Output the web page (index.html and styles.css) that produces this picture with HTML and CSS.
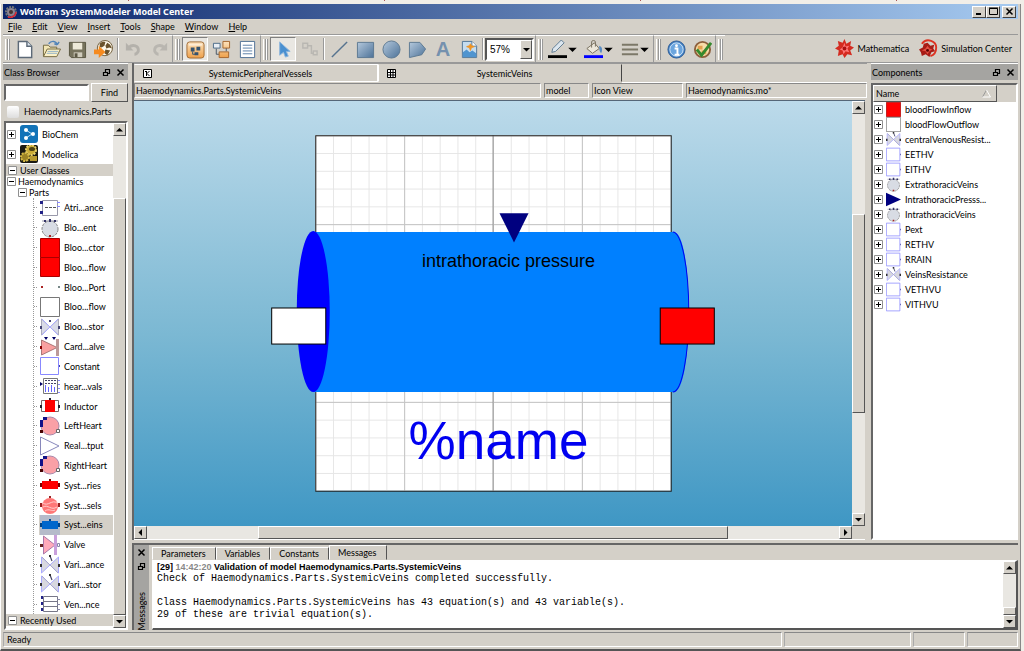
FILE: index.html
```html
<!DOCTYPE html>
<html lang="en">
<head>
  <meta charset="UTF-8">
  <meta name="viewport" content="width=device-width, initial-scale=1">
  <title>Wolfram SystemModeler Model Center</title>
  <link rel="stylesheet" href="styles.css">
</head>
<body>

<!-- shared icons -->
<svg class="sprite" aria-hidden="true">
  <linearGradient id="g-steel" x1="0" y1="0" x2="1" y2="1"><stop offset="0" stop-color="#b4c8dc"/><stop offset="1" stop-color="#4d7298"/></linearGradient>
  <linearGradient id="g-orange" x1="0" y1="0" x2="0" y2="1"><stop offset="0" stop-color="#fde3bd"/><stop offset="1" stop-color="#eea04a"/></linearGradient>
  <symbol id="plus" viewBox="0 0 9 9"><path d="M.5.5h8v8h-8z" fill="#fff" stroke="#909090"/><path d="M2 4.500h5M4.500 2v5" stroke="#000" fill="none"/></symbol>
  <symbol id="minus" viewBox="0 0 9 9"><path d="M.5.5h8v8h-8z" fill="#fff" stroke="#909090"/><path d="M2 4.500h5" stroke="#000"/></symbol>
  <symbol id="up" viewBox="0 0 9 9"><path d="M1 6.500h7L4.500 3z"/></symbol>
  <symbol id="down" viewBox="0 0 9 9"><path d="M1 3h7L4.500 6.500z"/></symbol>
  <symbol id="left" viewBox="0 0 9 9"><path d="M6 1v7L2.500 4.500z"/></symbol>
  <symbol id="right" viewBox="0 0 9 9"><path d="M3 1v7l3.500-3.500z"/></symbol>
  <symbol id="close" viewBox="0 0 9 9"><path d="M1.500 1.500l6 6M7.500 1.500l-6 6" stroke="#000" stroke-width="1.500"/></symbol>
  <symbol id="float" viewBox="0 0 9 9"><path d="M3.500 4V1.500h4v4H6M3 1.500h5M1.500 4.500h4v3h-4zM1 4.500h5" fill="none" stroke="#000" stroke-width="1.200"/></symbol>

  <symbol id="i-dots" viewBox="0 0 20 20"><path d="M2.500 2.500h15v15h-15z" fill="#fff" stroke="#99a"/><path d="M5 9.500h12" stroke="#555" stroke-dasharray="3 1"/><path d="M0 3h3v3H0zM0 13h3v3H0z" fill="#228"/><path d="M17 4.500h3M17 8.500h3" stroke="#88f"/></symbol>
  <symbol id="i-circle" viewBox="0 0 20 20"><circle cx="10" cy="11" r="8" fill="#d8dce4" stroke="#888" stroke-dasharray="3 1"/><path d="M2 3h16" stroke="#99a"/><path d="M4 2h2v2H4zM9 1h2v3H9zM14 2h2v2h-2z" fill="#336"/><path d="M9 17h2v2H9z" fill="#a22"/></symbol>
  <symbol id="i-red" viewBox="0 0 20 20"><path d="M.5.5h19v19H.5z" fill="#f00" stroke="#a00"/></symbol>
  <symbol id="i-port" viewBox="0 0 20 20"><path d="M1 9h2v2H1z" fill="#a22"/><path d="M18 9h2v2h-2z" fill="#788"/></symbol>
  <symbol id="i-white" viewBox="0 0 20 20"><path d="M.5.5h19v19H.5z" fill="#fff" stroke="#777"/></symbol>
  <symbol id="i-valves" viewBox="0 0 20 20"><path d="M1.500 2v16L10 10zM18.500 2v16L10 10z" fill="#d8dae8" stroke="#aab"/><path d="M2 2l16 16M18 2L2 18" stroke="#aaf"/><path d="M0 9h2v3H0zM18 9h2v3h-2zM9 3h2v2H9z" fill="#447"/></symbol>
  <symbol id="i-resist" viewBox="0 0 20 20"><path d="M1.500 2v16L10 10zM18.500 2v16L10 10z" fill="#d8d8df" stroke="#aaf"/><path d="M2 2l16 16" stroke="#aac"/><path d="M10 1l2 5" stroke="#446" stroke-width="1.200"/><path d="M0 9h2v3H0zM18 9h2v3h-2zM9 0h2v2H9z" fill="#333"/></symbol>
  <symbol id="i-card" viewBox="0 0 20 20"><path d="M1.500 3v15L17 10.500z" fill="#f9a0a0" stroke="#a77"/><path d="M16 2h3v17h-3z" fill="#b99"/><path d="M4 0h4L6 3zM12 0h4l-2 3z" fill="#006"/><path d="M0 9h2v3H0z" fill="#800"/></symbol>
  <symbol id="i-const" viewBox="0 0 20 20"><path d="M.5 1.500h18v17H.5z" fill="#fff" stroke="#88f"/><path d="M19 9h1v2h-1z" fill="#44a"/></symbol>
  <symbol id="i-heart" viewBox="0 0 20 20"><path d="M3.500 2.500h14v15h-14z" fill="#fff" stroke="#777"/><path d="M5 4.500h11M5 7.500h11" stroke="#446" stroke-dasharray="2 1"/><path d="M5.500 9v7M8.500 11v5M11.500 9v7M14.500 11v5" stroke="#66f"/><path d="M0 6l3 2-3 2z" fill="#006"/><path d="M18 4.500h2M18 8.500h2M18 12.500h2M18 16.500h2" stroke="#88f"/></symbol>
  <symbol id="i-ind" viewBox="0 0 20 20"><path d="M1.500 4.500h17v11h-17z" fill="#fff" stroke="#766"/><path d="M5 4h10v12H5z" fill="#f00"/><path d="M0 9h2v3H0zM18 9h2v3h-2zM9 2h2v2H9z" fill="#223"/></symbol>
  <symbol id="i-organ" viewBox="0 0 20 20"><circle cx="10" cy="10" r="9" fill="#faa0a6" stroke="#a8a"/><path d="M3 1h4v3H3zM0 4h3v7H0z" fill="#118"/><path d="M0 14h3v3H0z" fill="#400"/><path d="M16.500 13.500h3v3h-3z" fill="#fff" stroke="#666"/></symbol>
  <symbol id="i-real" viewBox="0 0 20 20"><path d="M.5 1L19 10 .5 19z" fill="#fff" stroke="#88b"/></symbol>
  <symbol id="i-artery" viewBox="0 0 20 20"><path d="M2 6h16v8H2z" fill="#f00"/><path d="M0 8h2v4H0zM18 8h2v4h-2zM9 4h2v2H9z" fill="#700"/></symbol>
  <symbol id="i-vessel" viewBox="0 0 20 20"><circle cx="10" cy="11" r="8" fill="#f77"/><path d="M3 8c5 4 9-4 14 0M3 12c5-3 8 4 14 0M5 16c4-3 7 1 10-1" stroke="#fcc" fill="none"/><path d="M0 8h2v4H0zM18 8h2v4h-2zM9 1h2v2H9z" fill="#922"/></symbol>
  <symbol id="i-vein" viewBox="0 0 20 20"><path d="M0 0h20v20H0z" fill="#b5bbca"/><path d="M2 6h16v8H2z" fill="#06c"/><path d="M0 8h2v4H0zM18 8h2v4h-2zM9 4h2v2H9z" fill="#048"/></symbol>
  <symbol id="i-valve" viewBox="0 0 20 20"><path d="M3.500 1v18L15 10z" fill="#fab" stroke="#a7a"/><path d="M14 0h3v20h-3z" fill="#c9a0dc"/><path d="M0 9h3v3H0z" fill="#622"/><path d="M17.500 8.500h2v3h-2z" fill="#fff" stroke="#88a"/></symbol>
  <symbol id="i-ven" viewBox="0 0 20 20"><path d="M3.500 2.500h14v15h-14zM4 7.500h14M4 12.500h14" fill="#fff" stroke="#778"/><path d="M1 2h2v3H1zM1 8h2v3H1zM1 14h2v3H1z" fill="#228"/><path d="M17 5.500h3M17 10.500h3M17 15.500h3" stroke="#88a"/></symbol>
  <symbol id="i-tri" viewBox="0 0 20 20"><path d="M0 1l20 9-20 9z" fill="#00007f"/></symbol>
</svg>

<div class="behind" aria-hidden="true"><i></i><i></i><i></i><i></i></div>
<div class="window">
  <header class="titlebar">
    <svg class="app-icon" viewBox="0 0 12 12"><circle cx="6" cy="6" r="4" fill="#8b8490"/><circle cx="6" cy="6" r="5" fill="none" stroke="#777" stroke-width="2" stroke-dasharray="2 1"/><path d="M3 11c4 1 8-1 8-5" fill="none" stroke="#d23" stroke-width="1.500"/><circle cx="6" cy="6" r="2" fill="#433"/></svg>
    <h1>Wolfram SystemModeler Model Center</h1>
    <div class="window-buttons">
      <button aria-label="Minimize"><svg viewBox="0 0 9 9"><path d="M1 7h5" stroke="#000" stroke-width="2"/></svg></button>
      <button aria-label="Maximize"><svg viewBox="0 0 9 9"><path d="M.5 1.500h8v6h-8zM0 1h9" fill="none" stroke="#000"/></svg></button>
      <button class="win-close" aria-label="Close"><svg><use href="#close"/></svg></button>
    </div>
  </header>

  <nav class="menubar">
    <button><u>F</u>ile</button>
    <button><u>E</u>dit</button>
    <button><u>V</u>iew</button>
    <button><u>I</u>nsert</button>
    <button><u>T</u>ools</button>
    <button><u>S</u>hape</button>
    <button><u>W</u>indow</button>
    <button><u>H</u>elp</button>
  </nav>

  <div class="toolbar">
    <div class="tool-group">
      <span class="grip"></span>
      <button class="tool" aria-label="New"><svg viewBox="0 0 20 20"><path d="M2.500 1.500h9l5 5v12h-14z" fill="#fff" stroke="#5d6a78" stroke-width="1.500"/><path d="M11.500 1.500v5h5" fill="#dfe8f2" stroke="#5d6a78" stroke-width="1.500"/></svg></button>
      <button class="tool" aria-label="Open"><svg viewBox="0 0 20 20"><path d="M1.500 17V5.500h5l2 2h7V10" fill="#f3e6b5" stroke="#73683f"/><path d="M1.500 17.500l4-8h14l-4 8z" fill="#fbf1c8" stroke="#73683f"/><path d="M7 4c3-4 8-3 9 1M16 5l2-3M16 5l-3-1" fill="none" stroke="#5284b8" stroke-width="1.500"/><path d="M6 12h11M5 14h11" stroke="#8fb0c6"/></svg></button>
      <button class="tool" aria-label="Save"><svg viewBox="0 0 20 20"><path d="M1.500 2.500h17v16h-15l-2-2z" fill="#77735d" stroke="#57533f"/><path d="M5 3h10v7H5z" fill="#eee9d8"/><path d="M6 13h9v5H6z" fill="#cfcbbb"/><path d="M7 14h3v4H7z" fill="#5b5744"/></svg></button>
      <button class="tool" aria-label="Publish"><svg viewBox="0 0 20 20"><circle cx="11.500" cy="8.500" r="8" fill="#fdf8ea" stroke="#715e3c"/><path d="M6 4c2-3 5-2 6-2l-1 4-3 2-2-1zM14 3l3 2 2 4-3-1-3 1-1-3zM12 10l5 1-3 5-3-2z" fill="#6a532d"/><path d="M0 10h5V6l7 6.500L5 19v-4H0z" fill="#f58a1f"/></svg></button>
      <span class="sep"></span>
      <button class="tool" aria-label="Undo" disabled><svg viewBox="0 0 20 20"><path d="M5 8c4-4 11-2 10 4-1 2-2 3-4 3" fill="none" stroke="#b4b1ab" stroke-width="3"/><path d="M2 3v8h8z" fill="#b4b1ab"/></svg></button>
      <button class="tool" aria-label="Redo" disabled><svg viewBox="0 0 20 20"><path d="M15 8C11 4 4 6 5 12c1 2 2 3 4 3" fill="none" stroke="#b9b6b0" stroke-width="3"/><path d="M18 3v8h-8z" fill="#b9b6b0"/></svg></button>
    </div>
    <div class="tool-group">
      <span class="grip"></span>
      <button class="tool pressed" aria-label="Icon View"><svg viewBox="0 0 20 20"><rect x="1" y="2" width="18" height="17" rx="3" fill="url(#g-orange)" stroke="#a06a34"/><path d="M7 12v3h3" fill="none" stroke="#35536f"/><path d="M5 8h4v4H5zM11 7h4v4h-4zM9 13h4v3H9z" fill="#35536f"/><path d="M3 4h14v2H3z" fill="#fff" opacity=".5"/></svg></button>
      <button class="tool" aria-label="Diagram View"><svg viewBox="0 0 20 20"><path d="M4.500 9v6h4M15 8v4" fill="none" stroke="#456"/><path d="M1.500 3.500h7v5h-7z" fill="#e9eef4" stroke="#4b6a88"/><path d="M11.500 1.500h7v7h-7zM7.500 12.500h10v6h-10z" fill="url(#g-orange)" stroke="#a5662d"/></svg></button>
      <button class="tool" aria-label="Text View"><svg viewBox="0 0 20 20"><path d="M2.500 1.500h15v17h-15z" fill="#fff" stroke="#4d6f94"/><path d="M5 5.500h10M5 8.500h10M5 11.500h10M5 14.500h10" stroke="#587da6"/></svg></button>
    </div>
    <div class="tool-group">
      <span class="grip"></span>
      <button class="tool pressed" aria-label="Select"><svg viewBox="0 0 20 20"><path d="M6 2v14l4-3 2 5 3-1-2-5h4z" fill="#4a90d0" stroke="#8db5dc"/></svg></button>
      <button class="tool" aria-label="Connect" disabled><svg viewBox="0 0 20 20"><path d="M3 3.500h5v5H3zM8 6h4v8h2M14 11.500h4v4h-4z" fill="none" stroke="#b9b7b2" stroke-width="1.500"/></svg></button>
      <span class="sep"></span>
      <button class="tool" aria-label="Line"><svg viewBox="0 0 20 20"><path d="M2 18L18 2" stroke="#56738f" stroke-width="1.500"/></svg></button>
      <button class="tool" aria-label="Rectangle"><svg viewBox="0 0 20 20"><path d="M1.500 2.500h17v16h-17z" fill="url(#g-steel)" stroke="#5c7891"/></svg></button>
      <button class="tool" aria-label="Ellipse"><svg viewBox="0 0 20 20"><circle cx="10" cy="10" r="9" fill="url(#g-steel)" stroke="#5c7891"/></svg></button>
      <button class="tool" aria-label="Polygon"><svg viewBox="0 0 20 20"><path d="M1.500 2.500h11l6 7-4 6-13 3z" fill="url(#g-steel)" stroke="#5c7891"/></svg></button>
      <button class="tool letter" aria-label="Text">A</button>
      <button class="tool" aria-label="Bitmap"><svg viewBox="0 0 20 20"><path d="M2.500 1.500h10l5 5v12h-15z" fill="#c5dcef" stroke="#4f7598"/><path d="M12.500 1.500v5h5" fill="#fff" stroke="#4f7598"/><path d="M3 13l4-3 3 3 3-2 4 3v4H3z" fill="#4f94cf"/><path d="M11 4l1 2 3 1-3 1-1 3-1-3-3-1 3-1z" fill="#f09422" stroke="#f09422"/></svg></button>
      <span class="sep tight"></span>
      <label class="zoom">
        <select aria-label="Zoom"><option>57%</option></select>
        <span class="zoom-arrow"><svg><use href="#down"/></svg></span>
      </label>
    </div>
    <div class="tool-group">
      <span class="grip"></span>
      <button class="tool wide" aria-label="Line colour"><svg viewBox="0 0 20 20"><path d="M5 9l9-9 3 3-9 9-4 1z" fill="#dce6ee" stroke="#5f7a91"/><path d="M0 16h20v3H0z"/></svg><svg class="drop"><use href="#down"/></svg></button>
      <button class="tool wide" aria-label="Fill colour"><svg viewBox="0 0 20 20"><path d="M3 9l8-6 5 6-7 5z" fill="#ece7da" stroke="#77705f"/><path d="M8 8V2c0-2 4-2 4 0v5" fill="none" stroke="#77705f"/><path d="M16 6c3 1 4 4 2 8-2-2-2-5-2-8z" fill="#5a8cc2"/><path d="M0 16h20v3H0z" fill="#00f"/></svg><svg class="drop"><use href="#down"/></svg></button>
      <button class="tool wide" aria-label="Line style"><svg viewBox="0 0 20 20"><path d="M2 5h17M2 10h17M2 15h17" stroke="#7c7868" stroke-width="2"/></svg><svg class="drop"><use href="#down"/></svg></button>
    </div>
    <div class="tool-group">
      <span class="grip"></span>
      <button class="tool" aria-label="Information"><svg viewBox="0 0 20 20"><circle cx="10" cy="10" r="9" fill="#3f7fc4" stroke="#2d5b93"/><circle cx="10" cy="10" r="7" fill="#6ba5de" stroke="#d4e6f7"/><circle cx="10" cy="6" r="1.500" fill="#fff"/><path d="M8 9h3v6M8 15.500h5" fill="none" stroke="#fff" stroke-width="2"/></svg></button>
      <button class="tool" aria-label="Validate class"><svg viewBox="0 0 20 20"><circle cx="10" cy="10" r="8" fill="#f6dca8" stroke="#8d5f3b" stroke-width="2"/><path d="M5 6h5v4H5zM9 11h5v4H9z" fill="#e2a04d"/><path d="M4 10l5 6L19 3" fill="none" stroke="#35892d" stroke-width="3"/></svg></button>
    </div>
    <div class="tool-group last"><span class="grip"></span></div>
    <div class="launchers">
      <button><svg viewBox="0 0 20 20"><path d="M10 0l2 5 5-3-1 5 4 2-4 3 2 5-5-1-3 4-2-4-5 2 1-6-4-2 4-3-1-5 5 2z" fill="#d42b20"/><path d="M10 4l1 4 4-1-2 3 2 4-4-1-2 3-1-4-3-1 3-2z" fill="#f77"/><circle cx="10" cy="10" r="2" fill="#a11"/></svg>Mathematica</button>
      <button><svg viewBox="0 0 20 20"><path d="M3 5c5-7 16-3 15 5 0 4-3 7-6 8" fill="none" stroke="#d32" stroke-width="2"/><path d="M9 4l3 3 4-1-1 4 2 3-4 1-2 5-4-3-4 2-1-4-2-3 4-2 1-4z" fill="#a81c16"/><path d="M9 7l2 3 3 1-3 2-2 3-2-3-4-1 4-2z" fill="#e34e42"/><circle cx="9" cy="12" r="1.500" fill="#500"/></svg>Simulation Center</button>
    </div>
  </div>

  <main class="workspace">
    <aside class="dock browser">
      <div class="dock-title"><h2>Class Browser</h2><button aria-label="Float"><svg><use href="#float"/></svg></button><button aria-label="Close"><svg><use href="#close"/></svg></button></div>
      <form class="search">
        <input type="text" aria-label="Search classes">
        <button type="button">Find</button>
      </form>
      <div class="current"><span class="swatch"></span>Haemodynamics.Parts</div>
      <div class="sunken tree-box">
        <div class="tree">
          <div class="lib"><svg class="exp"><use href="#plus"/></svg><svg class="lib-icon" viewBox="0 0 18 18"><rect width="18" height="18" rx="3" fill="#1273b8"/><path d="M6 5l6 4-6 4" stroke="#bfe3fa" fill="none"/><circle cx="6" cy="5" r="2" fill="#fff"/><circle cx="13" cy="9" r="2" fill="#fff"/><circle cx="6" cy="13" r="2" fill="#fff"/></svg>BioChem</div>
          <div class="lib"><svg class="exp"><use href="#plus"/></svg><svg class="lib-icon" viewBox="0 0 18 18"><rect width="18" height="18" rx="2" fill="#1b1a12"/><circle cx="11" cy="5" r="5" fill="#c9ab35" stroke="#e8d16a" stroke-width="2" stroke-dasharray="2 1"/><circle cx="5" cy="12" r="4" fill="#9c8325" stroke="#d6ba45" stroke-width="2" stroke-dasharray="2 1"/><ellipse cx="12" cy="4" rx="3" ry="2" fill="#4e4314"/><path d="M10 11h7v5h-7z" fill="#b79a30"/></svg>Modelica</div>
          <div class="section"><svg class="exp"><use href="#minus"/></svg>User Classes</div>
          <div class="branch"><svg class="exp"><use href="#minus"/></svg>Haemodynamics</div>
          <div class="branch sub"><svg class="exp"><use href="#minus"/></svg>Parts</div>
          <ul class="leaves">
            <li><svg><use href="#i-dots"/></svg>Atri...ance</li>
            <li><svg><use href="#i-circle"/></svg>Blo...ent</li>
            <li><svg><use href="#i-red"/></svg>Bloo...ctor</li>
            <li><svg><use href="#i-red"/></svg>Bloo...flow</li>
            <li><svg><use href="#i-port"/></svg>Bloo...Port</li>
            <li><svg><use href="#i-white"/></svg>Bloo...flow</li>
            <li><svg><use href="#i-valves"/></svg>Bloo...stor</li>
            <li><svg><use href="#i-card"/></svg>Card...alve</li>
            <li><svg><use href="#i-const"/></svg>Constant</li>
            <li><svg><use href="#i-heart"/></svg>hear...vals</li>
            <li><svg><use href="#i-ind"/></svg>Inductor</li>
            <li><svg><use href="#i-organ"/></svg>LeftHeart</li>
            <li><svg><use href="#i-real"/></svg>Real...tput</li>
            <li><svg><use href="#i-organ"/></svg>RightHeart</li>
            <li><svg><use href="#i-artery"/></svg>Syst...ries</li>
            <li><svg><use href="#i-vessel"/></svg>Syst...sels</li>
            <li class="selected"><svg><use href="#i-vein"/></svg>Syst...eins</li>
            <li><svg><use href="#i-valve"/></svg>Valve</li>
            <li><svg><use href="#i-resist"/></svg>Vari...ance</li>
            <li><svg><use href="#i-resist"/></svg>Vari...stor</li>
            <li><svg><use href="#i-ven"/></svg>Ven...nce</li>
          </ul>
          <div class="section"><svg class="exp"><use href="#minus"/></svg>Recently Used</div>
        </div>
        <div class="scroll tree-scroll"><button aria-label="Scroll up"><svg><use href="#up"/></svg></button><div class="track"><span class="thumb"></span></div><button aria-label="Scroll down"><svg><use href="#down"/></svg></button></div>
      </div>
    </aside>

    <section class="editor">
      <div class="doc-tabs">
        <button><svg viewBox="0 0 9 9"><path d="M.5.5h8v8h-8z" fill="#fff" stroke="#000"/><path d="M3.500 2v5M6.500 2L4 4.500 6.500 7M2 2.500h2" fill="none" stroke="#000"/></svg><span>SystemicPeripheralVessels</span></button>
        <button class="active"><svg viewBox="0 0 9 9"><path d="M.5.5h8v8h-8zM0 3.500h9M0 6h9M3.500 0v9M6 0v9" fill="#fff" stroke="#000"/></svg><span>SystemicVeins</span></button>
      </div>
      <div class="info-row">
        <span class="path">Haemodynamics.Parts.SystemicVeins</span>
        <span class="kind">model</span>
        <span class="view">Icon View</span>
        <span class="file">Haemodynamics.mo*</span>
      </div>
      <div class="canvas-area">
        <div class="canvas">
          <svg viewBox="0 0 717 424">
            <defs>
              <pattern id="grid-minor" width="17.750" height="17.750" patternUnits="userSpaceOnUse" x="181" y="34"><path d="M0 .5H18M.5 0V18" fill="none" stroke="#e6e6e6"/></pattern>
              <pattern id="grid-major" width="88.750" height="88.750" patternUnits="userSpaceOnUse" x="181" y="34"><path d="M0 .5H89M.5 0V89" fill="none" stroke="#c4c4c4"/></pattern>
            </defs>
            <rect x="181" y="34" width="355" height="355" fill="#fff"/>
            <rect x="181" y="34" width="355" height="355" fill="url(#grid-minor)"/>
            <rect x="181" y="34" width="355" height="355" fill="url(#grid-major)"/>
            <path d="M358.500 34v355" stroke="#999"/>
            <rect x="181.500" y="34.500" width="355" height="355" fill="none" stroke="#222"/>
            <path d="M179 130.500h360c20 0 20 160 0 160H179z" fill="#0080ff"/>
            <path d="M538 130.500a16 80 0 0 1 0 160" fill="#0080ff" stroke="#0000f0"/>
            <ellipse cx="179" cy="210" rx="16.500" ry="80.500" fill="#00f"/>
            <path d="M365 112h29l-14.500 29z" fill="#00007f"/>
            <rect x="137.500" y="206.500" width="54" height="36" fill="#fff" stroke="#000"/>
            <rect x="525.500" y="206.500" width="54" height="36" fill="#f00" stroke="#000"/>
            <text class="pressure" x="374" y="166">intrathoracic pressure</text>
            <text class="name" x="364" y="357">%name</text>
          </svg>
        </div>
        <div class="scroll canvas-v"><button aria-label="Scroll up"><svg><use href="#up"/></svg></button><div class="track"><span class="thumb"></span></div><button aria-label="Scroll down"><svg><use href="#down"/></svg></button></div>
        <div class="scroll horizontal"><button aria-label="Scroll left"><svg><use href="#left"/></svg></button><div class="track"><span class="thumb"></span></div><button aria-label="Scroll right"><svg><use href="#right"/></svg></button></div>
      </div>
    </section>

    <aside class="dock components">
      <div class="dock-title"><h2>Components</h2><button aria-label="Float"><svg><use href="#float"/></svg></button><button aria-label="Close"><svg><use href="#close"/></svg></button></div>
      <div class="sunken comp-box">
        <div class="comp-head"><button>Name<svg viewBox="0 0 9 9"><path d="M.5 8L4.500 1" stroke="#999" fill="none"/><path d="M4.500 1l4 7h-8" stroke="#fff" fill="none"/></svg></button></div>
        <ul class="comps">
          <li><svg class="exp"><use href="#plus"/></svg><svg><use href="#i-red"/></svg>bloodFlowInflow</li>
          <li><svg class="exp"><use href="#plus"/></svg><svg><use href="#i-white"/></svg>bloodFlowOutflow</li>
          <li><svg class="exp"><use href="#plus"/></svg><svg><use href="#i-resist"/></svg>centralVenousResist...</li>
          <li><svg class="exp"><use href="#plus"/></svg><svg><use href="#i-const"/></svg>EETHV</li>
          <li><svg class="exp"><use href="#plus"/></svg><svg><use href="#i-const"/></svg>EITHV</li>
          <li><svg class="exp"><use href="#plus"/></svg><svg><use href="#i-circle"/></svg>ExtrathoracicVeins</li>
          <li><svg class="exp"><use href="#plus"/></svg><svg><use href="#i-tri"/></svg>IntrathoracicPresss...</li>
          <li><svg class="exp"><use href="#plus"/></svg><svg><use href="#i-circle"/></svg>IntrathoracicVeins</li>
          <li><svg class="exp"><use href="#plus"/></svg><svg><use href="#i-const"/></svg>Pext</li>
          <li><svg class="exp"><use href="#plus"/></svg><svg><use href="#i-const"/></svg>RETHV</li>
          <li><svg class="exp"><use href="#plus"/></svg><svg><use href="#i-const"/></svg>RRAIN</li>
          <li><svg class="exp"><use href="#plus"/></svg><svg><use href="#i-resist"/></svg>VeinsResistance</li>
          <li><svg class="exp"><use href="#plus"/></svg><svg><use href="#i-const"/></svg>VETHVU</li>
          <li><svg class="exp"><use href="#plus"/></svg><svg><use href="#i-const"/></svg>VITHVU</li>
        </ul>
      </div>
    </aside>

    <section class="messages">
      <div class="side-title"><button aria-label="Close"><svg><use href="#close"/></svg></button><button aria-label="Float"><svg><use href="#float"/></svg></button><h2>Messages</h2></div>
      <div class="msg-main">
        <div class="msg-tabs">
          <button>Parameters</button>
          <button>Variables</button>
          <button>Constants</button>
          <button class="active">Messages</button>
        </div>
        <div class="sunken log">
          <div class="log-text">
            <p class="log-head">[29] <time>14:42:20</time> Validation of model Haemodynamics.Parts.SystemicVeins</p>
            <pre>Check of Haemodynamics.Parts.SystemicVeins completed successfully.

Class Haemodynamics.Parts.SystemicVeins has 43 equation(s) and 43 variable(s).
29 of these are trivial equation(s).</pre>
          </div>
          <div class="scroll log-scroll"><button aria-label="Scroll up"><svg><use href="#up"/></svg></button><div class="track"><span class="thumb"></span></div><button aria-label="Scroll down"><svg><use href="#down"/></svg></button></div>
        </div>
      </div>
    </section>
  </main>

  <footer class="statusbar">
    <span class="ready">Ready</span>
    <span class="cell progress"></span>
    <span class="cell"></span>
    <span class="cell"></span>
  </footer>
</div>
</body>
</html>
```
FILE: styles.css
```css
* {
  box-sizing: border-box;
}

body {
  margin: 0;
  height: 100vh;
  display: flex;
  flex-direction: column;
  background: #f1eee8;
  color: #000;
  font: 9px/11px Lato, "Liberation Sans", sans-serif;
  white-space: nowrap;
}

h1, h2, p, pre, ul {
  margin: 0;
  padding: 0;
  font-size: inherit;
  font-weight: normal;
  list-style: none;
}

button, input, select {
  margin: 0;
  padding: 0;
  border: 0;
  border-radius: 0;
  background: none;
  color: inherit;
  font: inherit;
}

svg {
  display: block;
  flex: none;
  width: 9px;
  height: 9px;
}

.sprite {
  position: absolute;
  width: 0;
  height: 0;
}

.behind {
  height: 4px;
  display: flex;
  justify-content: space-around;
}

.behind i {
  width: 1px;
  height: 1px;
  background: #a55;
}

.window {
  flex: 1;
  min-height: 0;
  display: flex;
  flex-direction: column;
  margin-right: 3px;
  padding: 0 2px;
  background: #d4d0c8;
  border-left: 1px solid #fff;
  border-right: 1px solid #888;
  border-bottom: 2px solid #555;
}

/* title and menu */

.titlebar {
  height: 15px;
  display: flex;
  align-items: center;
  gap: 3px;
  padding: 0 2px;
  background: linear-gradient(to right, #0a246a, #a6caf0);
  color: #fff;
}

.titlebar h1 {
  flex: 1;
  font: bold 9px/15px "Noto Sans", sans-serif;
}

.app-icon {
  width: 12px;
  height: 12px;
}

.window-buttons {
  display: flex;
}

.window-buttons button {
  width: 14px;
  height: 12px;
  display: grid;
  place-items: center;
  background: #d4d0c8;
  border: 1px solid;
  border-color: #fff #404040 #404040 #fff;
}

.window-buttons .win-close {
  margin-left: 2px;
}

.menubar {
  height: 15px;
  display: flex;
}

.menubar button {
  padding: 0 5px;
}

.menubar button:hover {
  background: #0a246a;
  color: #fff;
}

/* toolbar */

.toolbar {
  height: 29px;
  display: flex;
  border-top: 1px solid #999;
  border-bottom: 1px solid #999;
}

.tool-group {
  display: flex;
  align-items: center;
  border-top: 1px solid #fff;
  border-right: 1px solid #999;
}

.tool-group.last {
  border-right: 0;
}

.grip {
  width: 5px;
  height: 21px;
  margin: 0 2px;
  border-left: 1px solid #fff;
  border-right: 1px solid #999;
  background: linear-gradient(to right, #d4d0c8 1px, #999 1px, #999 2px, #fff 2px);
}

.tool {
  width: 26px;
  height: 24px;
  display: flex;
  align-items: center;
  justify-content: center;
}

.tool svg {
  width: 19px;
  height: 19px;
}

.tool.wide {
  width: 36px;
}

.tool .drop {
  width: 11px;
  height: 11px;
}

.tool.pressed {
  background: #e9e7e2;
  border: 1px solid;
  border-color: #808080 #fff #fff #808080;
}

.tool.letter {
  color: #7591ae;
  font: bold 20px/24px "Liberation Sans", sans-serif;
}

.sep {
  width: 2px;
  height: 22px;
  margin: 0 1px;
  border-left: 1px solid #999;
  border-right: 1px solid #fff;
}

.sep.tight {
  margin: 0;
}

.zoom {
  position: relative;
  width: 49px;
  height: 23px;
  margin: 0 1px;
  border: 2px solid;
  border-color: #555 #fff #fff #555;
  background: #fff;
}

.zoom select {
  width: 100%;
  height: 100%;
  padding-left: 3px;
  appearance: none;
  font-family: "Liberation Sans", sans-serif;
  font-size: 10px;
}

.zoom-arrow {
  position: absolute;
  top: 0;
  right: 0;
  bottom: 0;
  width: 12px;
  display: grid;
  place-items: center;
  background: #d4d0c8;
  border: 1px solid;
  border-color: #fff #555 #555 #fff;
  pointer-events: none;
}

.launchers {
  margin-left: auto;
  display: flex;
  align-items: center;
  gap: 10px;
  padding-right: 6px;
}

.launchers button {
  display: flex;
  align-items: center;
  gap: 3px;
}

.launchers svg {
  width: 19px;
  height: 19px;
}

/* docks */

.workspace {
  flex: 1;
  min-height: 0;
  display: grid;
  grid-template-columns: 125px minmax(0, 1fr) 147px;
  grid-template-rows: minmax(0, 1fr) 87px;
  column-gap: 4px;
  row-gap: 3px;
}

.dock {
  display: flex;
  flex-direction: column;
  min-height: 0;
}

.browser {
  grid-row: 1 / 3;
}

.dock-title {
  height: 17px;
  display: flex;
  align-items: center;
  gap: 5px;
  padding: 0 3px 0 1px;
  border-top: 1px solid #fff;
  background: #a5a4a1;
}

.dock-title h2 {
  flex: 1;
}

.sunken {
  border: 2px solid;
  border-color: #666 #fff #fff #666;
  background: #fff;
}

.search {
  display: flex;
  align-items: center;
  gap: 2px;
  padding: 3px 0 0 1px;
}

.search input {
  flex: 1;
  min-width: 0;
  height: 17px;
  background: #fff;
  border: 2px solid;
  border-color: #666 #fff #fff #666;
}

.search button {
  width: 37px;
  height: 19px;
  border: 1px solid;
  border-color: #fff #555 #555 #fff;
}

.current {
  height: 19px;
  display: flex;
  align-items: center;
  gap: 5px;
  padding-left: 4px;
}

.swatch {
  width: 12px;
  height: 12px;
  border-radius: 2px;
  background: linear-gradient(#fff, #ddd);
}

.tree-box {
  flex: 1;
  min-height: 0;
  display: flex;
  margin-left: 1px;
}

.tree {
  flex: 1;
  min-width: 0;
  display: flex;
  flex-direction: column;
  padding: 1px 0 2px;
  overflow: hidden;
}

.lib, .section, .branch, .leaves li, .comps li {
  flex: none;
  display: flex;
  align-items: center;
}

.lib {
  height: 20px;
  gap: 4px;
  padding-left: 1px;
}

.lib-icon {
  width: 18px;
  height: 18px;
}

.section {
  height: 12px;
  gap: 3px;
  padding-left: 2px;
  background: #d4d0c8;
}

.branch {
  height: 11px;
  gap: 2px;
  padding-left: 1px;
}

.branch.sub {
  padding-left: 12px;
}

.leaves {
  flex: 1;
  min-height: 0;
  display: flex;
  flex-direction: column;
  margin-left: 27px;
  border-left: 1px dotted #999;
}

.leaves li {
  flex: 1;
  min-height: 0;
  gap: 4px;
}

.leaves li::before {
  content: "";
  width: 3px;
  margin-right: -1px;
  border-top: 1px dotted #999;
}

.leaves svg {
  width: 20px;
  height: 20px;
}

.leaves .selected {
  background: linear-gradient(to right, #fff 5px, #d4d0c8 5px);
}

.components {
  min-width: 0;
}

.comp-box {
  flex: 1;
  margin: 3px 0 0;
  overflow: hidden;
}

.comp-head {
  height: 17px;
  background: #d4d0c8;
}

.comp-head button {
  width: 124px;
  height: 17px;
  display: flex;
  align-items: center;
  justify-content: space-between;
  padding: 0 5px 0 2px;
  border: 1px solid;
  border-color: #fff #555 #555 #fff;
}

.comps li {
  height: 15px;
  gap: 4px;
  padding-left: 1px;
}

.comps svg {
  width: 15px;
  height: 15px;
}

.comps .exp {
  width: 9px;
  height: 9px;
  margin-right: -1px;
}

/* editor */

.editor {
  display: flex;
  flex-direction: column;
  min-width: 0;
  min-height: 0;
  border-left: 2px solid #666;
}

.doc-tabs {
  height: 20px;
  display: flex;
  border-top: 1px solid #999;
}

.doc-tabs button {
  flex: 0 1 244px;
  height: 18px;
  display: flex;
  align-items: center;
  padding: 0 8px;
  border: 1px solid;
  border-color: #fff #fff #fff #d4d0c8;
}

.doc-tabs button.active {
  border-color: #d4d0c8 #444 #d4d0c8 #fff;
}

.doc-tabs::after {
  content: "";
  flex: 1;
  height: 18px;
  border-bottom: 1px solid #fff;
}

.doc-tabs span {
  flex: 1;
}

.info-row {
  display: grid;
  grid-template-columns: minmax(0, 1fr) 45px 91px 181px;
  gap: 3px;
  height: 17px;
  padding-bottom: 2px;
}

.info-row span {
  padding: 1px;
  border: 1px solid;
  border-color: #888 #fff #fff #888;
  overflow: hidden;
}

.canvas-area {
  flex: 1;
  min-height: 0;
  display: grid;
  grid-template-columns: minmax(0, 1fr) 13px;
  grid-template-rows: minmax(0, 1fr) 13px;
  margin-right: 2px;
  border-top: 1px solid #567;
  border-bottom: 1px solid #fff;
}

.canvas {
  min-height: 0;
  background: linear-gradient(#bcdaea, #7bb8d3 55%, #3f97c4);
}

.canvas svg {
  width: 100%;
  height: 100%;
}

.pressure {
  font: 18px "Liberation Sans", sans-serif;
  text-anchor: middle;
}

.name {
  font: 53px "Liberation Sans", sans-serif;
  text-anchor: middle;
  fill: #0000f0;
}

/* scroll bars: the thumb sits between two shares of the track */

.scroll {
  width: 13px;
  display: flex;
  flex-direction: column;
  background: #e9e7e2;
}

.scroll button {
  flex: none;
  width: 13px;
  height: 13px;
  display: grid;
  place-items: center;
  background: #d4d0c8;
  border: 1px solid;
  border-color: #fff #555 #555 #fff;
}

.track {
  flex: 1;
  display: grid;
}

.thumb {
  grid-area: 2 / 1;
  background: #d4d0c8;
  border: 1px solid;
  border-color: #fff #555 #555 #fff;
}

.tree-scroll .track {
  grid-template-rows: 13fr 87fr 0fr;
}

.canvas-v .track {
  grid-template-rows: 25fr 50fr 25fr;
}

.log-scroll .track {
  grid-template-rows: 80fr 20fr 0fr;
}

.horizontal {
  width: auto;
  flex-direction: row;
}

.horizontal .track {
  grid-template-columns: 16fr 68fr 16fr;
}

.horizontal .thumb {
  grid-area: 1 / 2;
}

/* messages */

.messages {
  grid-column: 2 / 4;
  display: flex;
  min-width: 0;
  min-height: 0;
  border-top: 2px solid #666;
  border-left: 2px solid #666;
}

.side-title {
  width: 15px;
  margin-right: 3px;
  display: flex;
  flex-direction: column;
  align-items: center;
  gap: 5px;
  padding-top: 3px;
  background: #a5a4a1;
}

.side-title h2 {
  margin-top: auto;
  writing-mode: vertical-rl;
  transform: rotate(180deg);
}

.msg-main {
  flex: 1;
  min-width: 0;
  display: flex;
  flex-direction: column;
}

.msg-tabs {
  height: 15px;
  display: flex;
  align-items: flex-end;
}

.msg-tabs button {
  height: 13px;
  padding: 0 9px 0 8px;
  border: 1px solid;
  border-color: #fff #555 transparent #fff;
}

.msg-tabs .active {
  height: 15px;
}

.log {
  flex: 1;
  min-height: 0;
  display: flex;
  border-color: #fff #555 #555 #fff;
  border-width: 1px 2px 2px 1px;
}

.log-text {
  flex: 1;
  min-width: 0;
  padding-left: 4px;
  overflow: hidden;
}

.log-head {
  font: bold 9px/12px "Liberation Sans", sans-serif;
}

.log-head time {
  color: #888;
}

pre {
  font: 10px/12px "Liberation Mono", monospace;
}

.statusbar {
  height: 19px;
  display: grid;
  grid-template-columns: minmax(0, 1fr) 127px 52px 51px;
  gap: 2px;
  padding: 2px 0;
}

.statusbar span {
  padding: 1px 3px;
  border: 1px solid;
  border-color: #888 #fff #fff #aaa;
}
```
